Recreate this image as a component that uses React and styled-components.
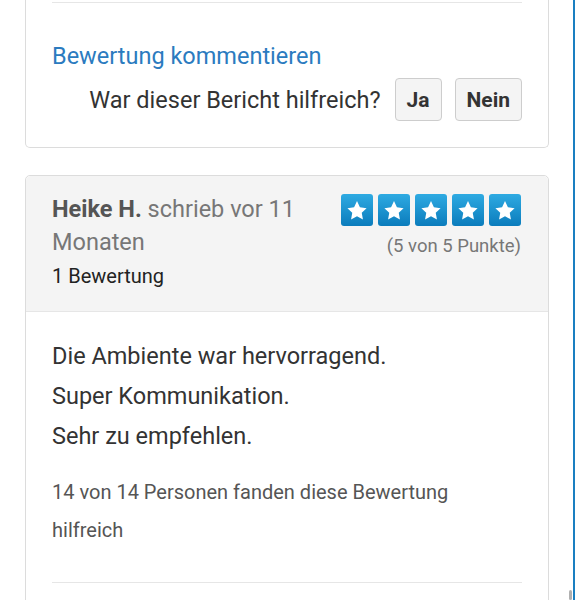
import React from "react";
import styled, { createGlobalStyle } from "styled-components";

const GlobalStyle = createGlobalStyle`
  html, body {
    margin: 0;
    padding: 0;
    background: #fff;
    font-family: Roboto, "Liberation Sans", Arial, sans-serif;
    overflow: hidden;
  }
`;

const Page = styled.div`
  position: relative;
  width: 575px;
  height: 600px;
  border-right: 2px solid #1a7fc1;
  padding: 0 24px 0 25px;
  box-sizing: border-box;
  overflow: hidden;
`;

const Card = styled.div`
  border: 1px solid #dcdcdc;
  border-radius: 5px;
  background: #fff;
  margin-bottom: 27px;
  ${(p) => p.$cut && "border-top: none; border-top-left-radius: 0; border-top-right-radius: 0;"}
`;

const Section = styled.div`
  padding: ${(p) => p.$pad || "0 26px"};
`;

const Rule = styled.hr`
  border: none;
  border-top: 1px solid #e6e6e6;
  margin: ${(p) => p.$margin || "0"};
`;

const Link = styled.a`
  display: block;
  color: #2b7bbf;
  font-size: 23.5px;
  line-height: 30px;
  text-decoration: none;
  margin-top: 38px;
`;

const HelpRow = styled.div`
  display: flex;
  justify-content: flex-end;
  align-items: center;
  gap: 13px;
  margin-top: 7px;
  padding-bottom: 26px;
`;

const Question = styled.span`
  font-size: 23.5px;
  color: #333;
  margin-right: 1px;
`;

const VoteButton = styled.button`
  height: 43px;
  padding: 0 11px;
  background: #f4f4f4;
  border: 1px solid #cdcdcd;
  border-radius: 4px;
  font-family: inherit;
  font-size: 21px;
  font-weight: 700;
  color: #333;
`;

const Header = styled.div`
  display: flex;
  gap: 20px;
  background: #f4f4f4;
  border-bottom: 1px solid #e6e6e6;
  border-radius: 5px 5px 0 0;
  padding: 17px 27px 18px 26px;
`;

const Author = styled.div`
  flex: 1;
`;

const NameLine = styled.div`
  font-size: 23.5px;
  line-height: 33px;
  color: #777;
`;

const Name = styled.b`
  color: #555;
`;

const Count = styled.div`
  font-size: 20px;
  line-height: 34px;
  color: #222;
`;

const Rating = styled.div`
  display: flex;
  flex-direction: column;
  align-items: flex-end;
  padding-top: 1px;
`;

const Stars = styled.div`
  display: flex;
  gap: 5px;
`;

const StarBox = styled.span`
  width: 32px;
  height: 32px;
  border-radius: 3px;
  background: linear-gradient(#2eaae2, #0b7cbc);
  display: flex;
  align-items: center;
  justify-content: center;
`;

const Score = styled.div`
  font-size: 18.5px;
  line-height: 24px;
  color: #777;
  margin-top: 8px;
`;

const Text = styled.p`
  margin: 0;
  font-size: 23.5px;
  line-height: 40px;
  color: #333;
`;

const Helpful = styled.p`
  margin: 17px 0 0;
  max-width: 430px;
  font-size: 20px;
  line-height: 38px;
  color: #555;
`;

const Thumb = styled.div`
  position: absolute;
  right: 1px;
  bottom: 0;
  width: 3px;
  height: 10px;
  border-radius: 2px;
  background: #b0b0b0;
`;

const Star = () => (
  <StarBox>
    <svg width="22" height="21" viewBox="0 0 24 23">
      <path
        fill="#fff"
        d="M12 1.2l3.2 6.7 7.3 1-5.3 5.1 1.3 7.3L12 17.8l-6.5 3.5 1.3-7.3L1.5 8.9l7.3-1z"
      />
    </svg>
  </StarBox>
);

export default function App() {
  return (
    <>
      <GlobalStyle />
      <Page>
        <Card $cut>
          <Section $pad="2px 26px 0">
            <Rule />
            <Link href="#">Bewertung kommentieren</Link>
            <HelpRow>
              <Question>War dieser Bericht hilfreich?</Question>
              <VoteButton>Ja</VoteButton>
              <VoteButton>Nein</VoteButton>
            </HelpRow>
          </Section>
        </Card>
        <Card>
          <Header>
            <Author>
              <NameLine>
                <Name>Heike H.</Name> schrieb vor 11 Monaten
              </NameLine>
              <Count>1 Bewertung</Count>
            </Author>
            <Rating>
              <Stars>
                {[0, 1, 2, 3, 4].map((i) => (
                  <Star key={i} />
                ))}
              </Stars>
              <Score>(5 von 5 Punkte)</Score>
            </Rating>
          </Header>
          <Section $pad="24px 26px 80px">
            <Text>
              Die Ambiente war hervorragend.
              <br />
              Super Kommunikation.
              <br />
              Sehr zu empfehlen.
            </Text>
            <Helpful>14 von 14 Personen fanden diese Bewertung hilfreich</Helpful>
            <Rule $margin="33px 0 0" />
          </Section>
        </Card>
        <Thumb />
      </Page>
    </>
  );
}
